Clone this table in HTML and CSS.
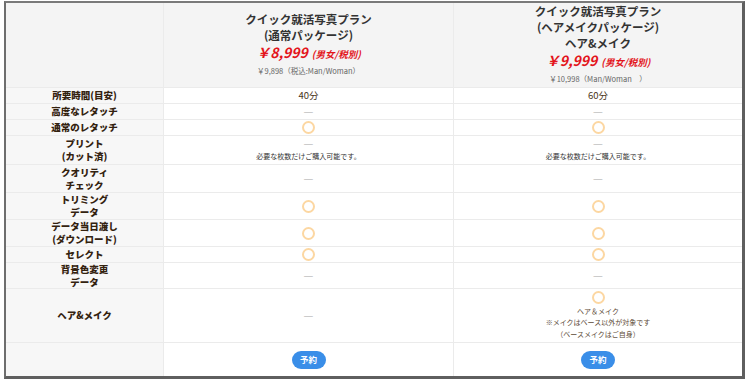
FILE: index.html
```html
<!DOCTYPE html>
<html lang="ja">
<head>
<meta charset="utf-8">
<title>クイック就活写真プラン</title>
<link rel="stylesheet" href="styles.css">
</head>
<body>
<div class="frame">
  <div class="plan-table">
    <div class="cell head label"></div>
    <div class="cell head">
      <div class="title">クイック就活写真プラン</div>
      <div class="title">(通常パッケージ)</div>
      <div class="price"><span class="yen">￥8,999</span><span class="tax">(男女/税別)</span></div>
      <div class="incl">￥9,898（税込:Man/Woman）</div>
    </div>
    <div class="cell head">
      <div class="title">クイック就活写真プラン</div>
      <div class="title">(ヘアメイクパッケージ)</div>
      <div class="title">ヘア&amp;メイク</div>
      <div class="price"><span class="yen">￥9,999</span><span class="tax">(男女/税別)</span></div>
      <div class="incl">￥10,998（Man/Woman　）</div>
    </div>

    <div class="cell label">所要時間(目安)</div>
    <div class="cell val">40分</div>
    <div class="cell val">60分</div>

    <div class="cell label">高度なレタッチ</div>
    <div class="cell val"><span class="dash">—</span></div>
    <div class="cell val"><span class="dash">—</span></div>

    <div class="cell label">通常のレタッチ</div>
    <div class="cell val"><span class="ok"></span></div>
    <div class="cell val"><span class="ok"></span></div>

    <div class="cell label">プリント<br>(カット済)</div>
    <div class="cell val"><span class="dash">—</span><span class="note">必要な枚数だけご購入可能です。</span></div>
    <div class="cell val"><span class="dash">—</span><span class="note">必要な枚数だけご購入可能です。</span></div>

    <div class="cell label">クオリティ<br>チェック</div>
    <div class="cell val"><span class="dash">—</span></div>
    <div class="cell val"><span class="dash">—</span></div>

    <div class="cell label">トリミング<br>データ</div>
    <div class="cell val"><span class="ok"></span></div>
    <div class="cell val"><span class="ok"></span></div>

    <div class="cell label">データ当日渡し<br>(ダウンロード)</div>
    <div class="cell val"><span class="ok"></span></div>
    <div class="cell val"><span class="ok"></span></div>

    <div class="cell label">セレクト</div>
    <div class="cell val"><span class="ok"></span></div>
    <div class="cell val"><span class="ok"></span></div>

    <div class="cell label">背景色変更<br>データ</div>
    <div class="cell val"><span class="dash">—</span></div>
    <div class="cell val"><span class="dash">—</span></div>

    <div class="cell label">ヘア&amp;メイク</div>
    <div class="cell val"><span class="dash">—</span></div>
    <div class="cell val">
      <span class="ok ok-gap"></span>
      <span class="hm">ヘア＆メイク</span>
      <span class="hm">※メイクはベース以外が対象です</span>
      <span class="hm">（ベースメイクはご自身）</span>
    </div>

    <div class="cell label"></div>
    <div class="cell val"><a class="btn" href="#">予約</a></div>
    <div class="cell val"><a class="btn" href="#">予約</a></div>
  </div>
</div>
</body>
</html>
```

FILE: styles.css
```css
html, body {
  margin: 0;
  padding: 0;
  background: #ffffff;
}

body {
  font-family: "Noto Sans CJK JP", "Noto Sans", sans-serif;
}

.frame {
  margin: 1px 0 0 4px;
  width: 736px;
  border-top: 2px solid #7a7a7a;
  border-left: 2px solid #6e6e6e;
  border-right: 3px solid #5f5f5f;
  border-bottom: 3px solid #5f5f5f;
}

.plan-table {
  display: grid;
  grid-template-columns: 157px 289px 288px;
  grid-template-rows: 84px 15px 15px 15px 28px 27px 26px 26px 15px 25px 53px 33px;
  gap: 1px;
  background: #ebebeb;
}

.cell {
  display: flex;
  flex-direction: column;
  align-items: center;
  justify-content: center;
  text-align: center;
  background: #ffffff;
  overflow: hidden;
}

.label {
  background: #f7f7f7;
  font-weight: 900;
  font-size: 9.5px;
  line-height: 13px;
  color: #33220f;
}

.head {
  background: #f4f4f4;
}

.title {
  font-size: 11.5px;
  font-weight: 700;
  line-height: 16px;
  color: #333333;
}

.price {
  line-height: 16px;
  color: #e3141b;
  font-style: italic;
  font-weight: 700;
}

.yen {
  font-size: 14px;
}

.tax {
  font-size: 9.5px;
  margin-left: 4px;
}

.incl {
  font-size: 7.5px;
  line-height: 17px;
  color: #666666;
}

.val {
  font-size: 9.5px;
  line-height: 13px;
  color: #4a3520;
}

.dash {
  color: #c2c2c2;
  font-size: 11px;
  line-height: 13px;
}

.note {
  font-size: 7px;
  line-height: 13px;
  color: #333333;
}

.ok {
  display: block;
  width: 9px;
  height: 9px;
  border: 2.5px solid #fcd7a2;
  border-radius: 50%;
}

.ok-gap {
  margin-bottom: 2px;
}

.hm {
  font-size: 7px;
  line-height: 11.5px;
  color: #5c4a36;
}

.btn {
  display: flex;
  align-items: center;
  justify-content: center;
  width: 34px;
  height: 18px;
  border-radius: 9px;
  background: #3a8ee8;
  color: #ffffff;
  font-size: 8.5px;
  font-weight: 700;
  text-decoration: none;
}
```
